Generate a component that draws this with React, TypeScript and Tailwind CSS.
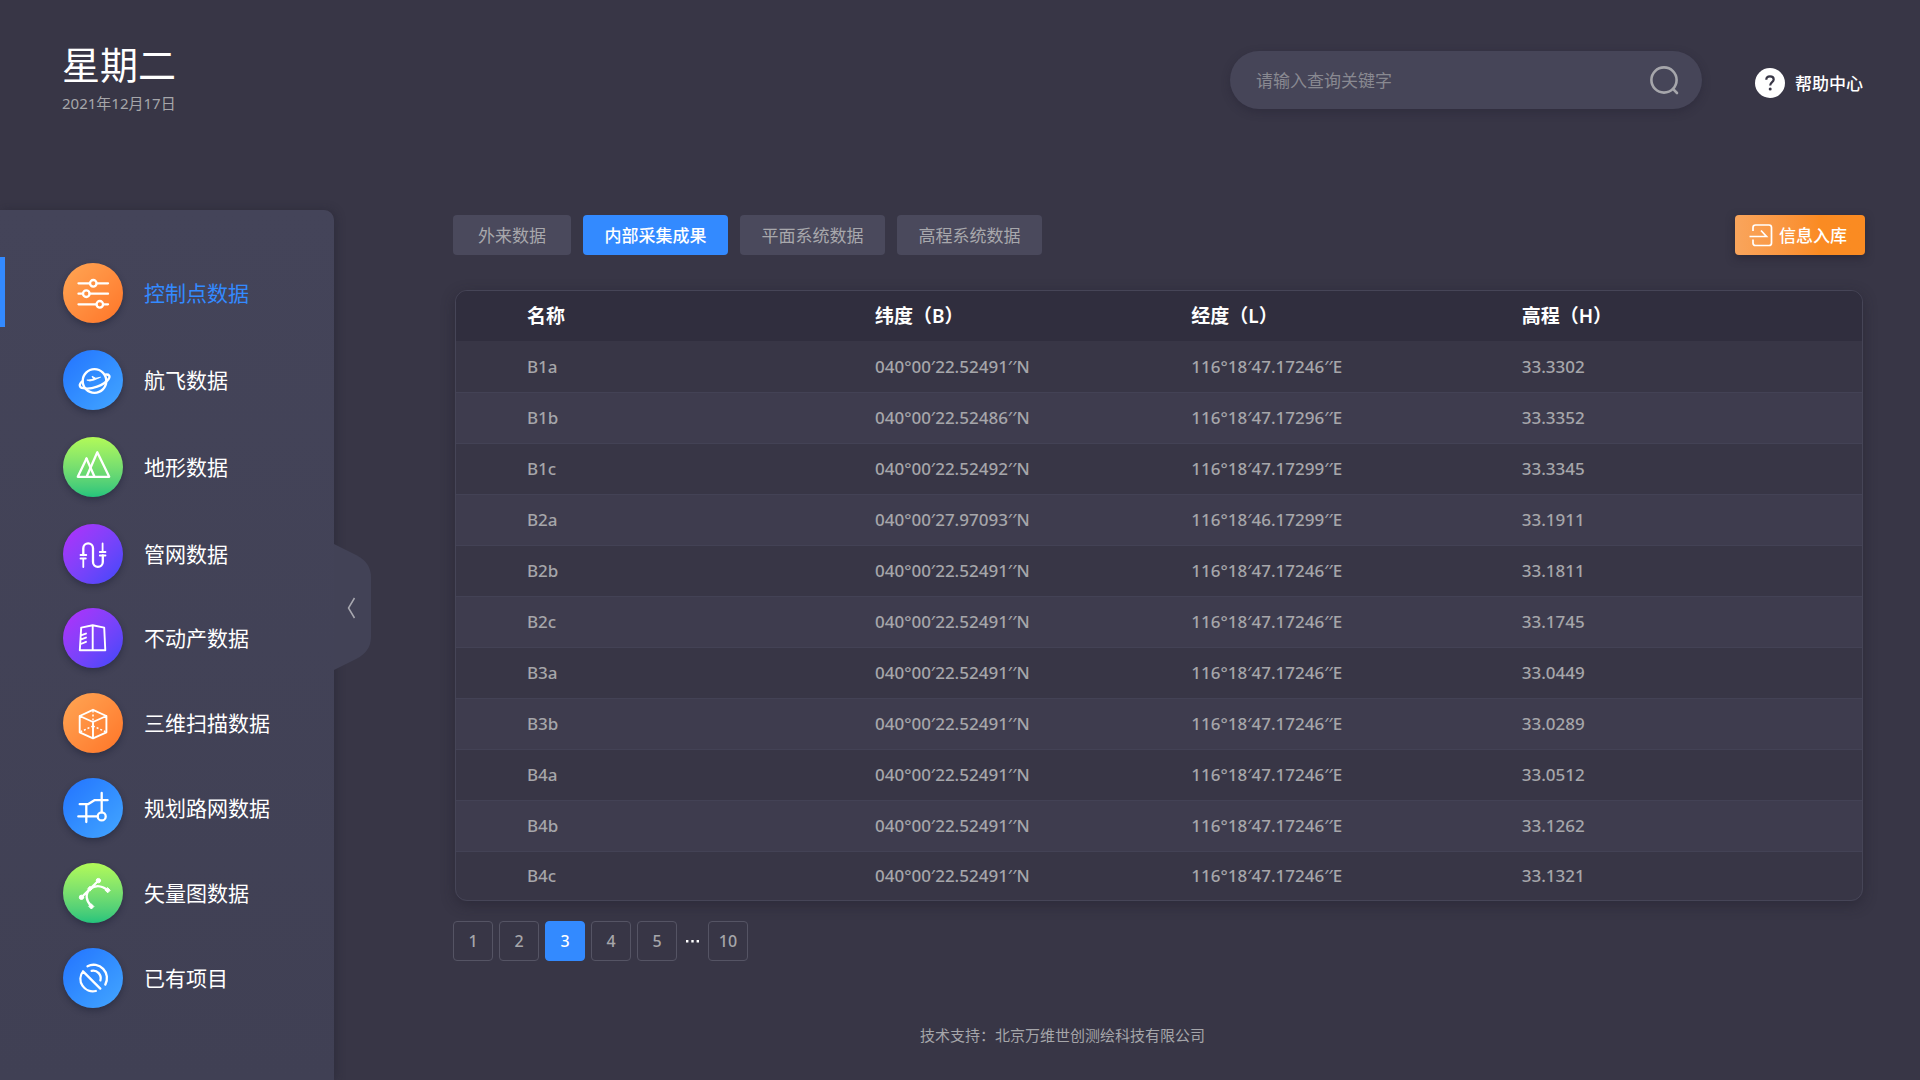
import type { ReactNode } from "react";

type MenuItem = {
    label: string;
    color: string;
    icon: ReactNode;
    active?: boolean;
};

const ORANGE = "bg-linear-to-br from-[#ffa654] to-[#ff7426]";
const BLUE = "bg-linear-to-br from-[#2472ff] to-[#44a6ff]";
const GREEN = "bg-linear-to-b from-[#b2fa57] to-[#22c47c]";
const PURPLE = "bg-linear-to-br from-[#b32cfa] to-[#3a47fa]";

const mainItems: MenuItem[] = [
    {
        label: "控制点数据",
        color: ORANGE,
        active: true,
        icon: (
            <>
                <path d="M15.5 20.3H27M33.6 20.3H45M15.5 30.7H20M26.6 30.7H45M15.5 41.3H33.4M40 41.3H45" />
                <circle cx="30.3" cy="20.3" r="3.3" />
                <circle cx="23.3" cy="30.7" r="3.3" />
                <circle cx="36.8" cy="41.3" r="3.3" />
            </>
        ),
    },
    {
        label: "航飞数据",
        color: BLUE,
        icon: (
            <>
                <circle cx="31.5" cy="31" r="11.8" />
                <path d="M42.3 24.6C46 24 47.6 26 45.6 29C41 35.6 28 39.8 20.4 38.2C15.8 37.4 15.6 34.2 19.6 31.2" />
                <path d="M24.2 30.2L26.8 31L31.2 30L37.6 27.2L32.8 28.2L29 26.2L30.4 29Z" fill="#fff" strokeWidth="0.8" />
            </>
        ),
    },
    {
        label: "地形数据",
        color: GREEN,
        icon: (
            <>
                <path d="M23.5 21.5L14.8 39.8H46.2L34.3 15.2L23.6 39.8" />
                <path d="M23.5 21.5L31.5 39.8" />
            </>
        ),
    },
    {
        label: "管网数据",
        color: PURPLE,
        icon: (
            <>
                <path d="M20.3 31V24.2A4.85 4.85 0 0 1 30 24.2V38A4.9 4.9 0 0 0 39.8 38V31.5" />
                <path d="M17.5 31H23.3M17.5 34.5H22.8M20.3 34.5V43M36.8 28H42.5M36.8 31.5H42.5M39.6 19.5V28" strokeWidth="1.8" />
            </>
        ),
    },
];

const projectItems: MenuItem[] = [
    {
        label: "不动产数据",
        color: PURPLE,
        icon: (
            <path
                d="M16.8 42.3L18.2 19.6L29.7 17.2L41.2 19.6L42.3 42.3ZM29.7 17.2V42.3M18.6 27.2L23 25.6M18.2 31.4L23 29.6M17.8 36L23 33.8"
                strokeWidth="1.9"
            />
        ),
    },
    {
        label: "三维扫描数据",
        color: ORANGE,
        icon: (
            <>
                <path d="M30 16.8L43.4 23V39.3L30 45.3L16.7 39.3V23ZM16.7 23L30 29L43.4 23M30 29V45.3" strokeWidth="1.9" />
                <path d="M30 17.5V29M30 33L17.5 38.8M30 33L42.6 38.8" strokeWidth="1.5" strokeDasharray="2 2" strokeLinecap="butt" />
            </>
        ),
    },
    {
        label: "规划路网数据",
        color: BLUE,
        icon: (
            <>
                <path d="M16.7 26.2H25L31.4 22.2H44.6M23.3 26.2V44M15.3 38.4H34.6M38.7 15V34.4" />
                <circle cx="38.7" cy="38.4" r="4" />
            </>
        ),
    },
    {
        label: "矢量图数据",
        color: GREEN,
        icon: (
            <>
                <path d="M18.5 34.3L35.3 17.7M28.3 43C22.8 37.6 22 31 27 25.8C32.6 21.8 39.4 22.6 44.6 27.3" />
                <circle cx="18.5" cy="34.3" r="2.2" fill="#fff" strokeWidth="1" />
                <circle cx="35.4" cy="17.6" r="2.2" fill="#fff" strokeWidth="1" />
                <path d="M24.8 25.5L27 23.3L29.4 25.6L27 28ZM44.7 24.8L47.2 27.3L44.7 29.8L42.2 27.3ZM28.4 41L30.9 43.5L28.4 46L25.9 43.5Z" fill="#fff" strokeWidth="1" />
            </>
        ),
    },
    {
        label: "已有项目",
        color: BLUE,
        icon: (
            <path d="M20 23.4L37.3 40.6M20 23.4A12.4 12.4 0 0 0 32.8 43M24.5 18.2A13.4 13.4 0 0 1 42.3 36.6M28.6 22.8A7.6 7.6 0 0 1 37.4 32.4" />
        ),
    },
];

const tabs = [
    { label: "外来数据", size: "w-[118px]" },
    { label: "内部采集成果", size: "w-[145px]", active: true },
    { label: "平面系统数据", size: "w-[145px]" },
    { label: "高程系统数据", size: "w-[145px]" },
];

const rows = [
    ["B1a", "040°00′22.52491′′N", "116°18′47.17246′′E", "33.3302"],
    ["B1b", "040°00′22.52486′′N", "116°18′47.17296′′E", "33.3352"],
    ["B1c", "040°00′22.52492′′N", "116°18′47.17299′′E", "33.3345"],
    ["B2a", "040°00′27.97093′′N", "116°18′46.17299′′E", "33.1911"],
    ["B2b", "040°00′22.52491′′N", "116°18′47.17246′′E", "33.1811"],
    ["B2c", "040°00′22.52491′′N", "116°18′47.17246′′E", "33.1745"],
    ["B3a", "040°00′22.52491′′N", "116°18′47.17246′′E", "33.0449"],
    ["B3b", "040°00′22.52491′′N", "116°18′47.17246′′E", "33.0289"],
    ["B4a", "040°00′22.52491′′N", "116°18′47.17246′′E", "33.0512"],
    ["B4b", "040°00′22.52491′′N", "116°18′47.17246′′E", "33.1262"],
    ["B4c", "040°00′22.52491′′N", "116°18′47.17246′′E", "33.1321"],
];

const pages = ["1", "2", "3", "4", "5", "…", "10"];

function MenuList({ items, gap }: { items: MenuItem[]; gap: string }) {
    return (
        <ul className={`flex flex-col ${gap}`}>
            {items.map((item) => (
                <li key={item.label} className="relative">
                    {item.active && <span className="absolute left-0 -top-[6px] w-[5px] h-[70px] bg-[#338aff]" />}
                    <a href="#" className={`flex items-center gap-[21px] pl-[63px] text-[21px] ${item.active ? "text-[#338aff]" : "text-white"}`}>
                        <span className={`w-[60px] h-[60px] shrink-0 rounded-full shadow-[0_3px_6px_rgba(20,25,45,0.4)] ${item.color}`}>
                            <svg viewBox="0 0 60 60" fill="none" stroke="#fff" strokeWidth="2.3" strokeLinecap="round" strokeLinejoin="round">
                                {item.icon}
                            </svg>
                        </span>
                        {item.label}
                    </a>
                </li>
            ))}
        </ul>
    );
}

function Sidebar() {
    return (
        <nav className="relative w-[334px] shrink-0 pt-[53px] rounded-tr-[10px] bg-linear-to-b from-[#444459] to-[#404054] shadow-[2px_0_10px_rgba(30,28,42,0.35)]">
            <div className="flex flex-col gap-6">
                <MenuList items={mainItems} gap="gap-[27px]" />
                <MenuList items={projectItems} gap="gap-[25px]" />
            </div>
            {/* 收起按钮 */}
            <button type="button" aria-label="收起" className="absolute left-full top-[334px] w-[37px] h-[126px]">
                <svg viewBox="0 0 37 126" fill="none">
                    <path d="M0 0L23 11.5Q37 19 37 33V93Q37 107 23 114.5L0 126Z" fill="#424256" />
                    <path d="M20.5 54L14.5 64L20.5 74" stroke="#a8a8b0" strokeWidth="1.5" />
                </svg>
            </button>
        </nav>
    );
}

function Header() {
    return (
        <header className="flex justify-between h-[210px] pl-[62px] pr-[57px]">
            <div className="pt-[41px]">
                <h1 className="text-[38px] leading-[44px] text-white">星期二</h1>
                <p className="mt-2 text-[15px] leading-5 text-[#a6a6aa] font-['Noto_Sans','Noto_Sans_CJK_SC',sans-serif]">2021年12月17日</p>
            </div>
            <div className="flex items-start">
                <form className="flex items-center w-[472px] h-[58px] mt-[51px] mr-[53px] pl-[26px] pr-[23px] rounded-full bg-[#464558] shadow-[0_3px_8px_rgba(35,33,50,0.4)]">
                    <input
                        type="search"
                        aria-label="查询关键字"
                        placeholder="请输入查询关键字"
                        className="flex-1 min-w-0 bg-transparent text-[17px] text-white placeholder:text-[#898991] outline-none"
                    />
                    <button type="submit" aria-label="搜索">
                        <svg width="30" height="30" viewBox="0 0 30 30" fill="none" stroke="#a6a6ab" strokeWidth="2.6" strokeLinecap="round">
                            <circle cx="15" cy="15" r="12.6" />
                            <path d="M24.2 24.2L28 28" />
                        </svg>
                    </button>
                </form>
                <a href="#" className="flex items-center gap-[10px] h-[30px] mt-[68px] text-[17px] font-medium text-white">
                    <svg width="30" height="30" viewBox="0 0 30 30" fill="none">
                        <circle cx="15" cy="15" r="15" fill="#fff" />
                        <path d="M11.3 11.8C11.3 9.5 12.9 8.4 15 8.4C17.2 8.4 18.7 9.6 18.7 11.5C18.7 14 15.2 14.3 15.2 17.4" stroke="#383646" strokeWidth="2.2" />
                        <circle cx="15.2" cy="21.1" r="1.5" fill="#383646" />
                    </svg>
                    帮助中心
                </a>
            </div>
        </header>
    );
}

function DataTable() {
    return (
        <div className="mx-[2px] mt-[35px] overflow-hidden rounded-[12px] border border-[#464557] shadow-[0_4px_14px_rgba(30,28,42,0.45)]">
            <table className="w-full table-fixed text-left font-['Noto_Sans','Noto_Sans_CJK_SC',sans-serif]">
                <colgroup>
                    <col className="w-[29.8%]" />
                    <col className="w-[22.5%]" />
                    <col className="w-[23.5%]" />
                    <col />
                </colgroup>
                <thead>
                    <tr className="h-[50px] bg-[#302e3e] text-[19px] text-white">
                        <th className="pl-[71px] font-semibold">名称</th>
                        <th className="font-semibold">纬度（B）</th>
                        <th className="font-semibold">经度（L）</th>
                        <th className="font-semibold">高程（H）</th>
                    </tr>
                </thead>
                <tbody className="text-[17px] font-medium text-[#a6a6aa]">
                    {rows.map((row) => (
                        <tr key={row[0]} className="h-[51px] last:h-[49px] border-b border-[#434255] last:border-b-0 even:bg-[#3e3c4e]">
                            <td className="pl-[71px]">{row[0]}</td>
                            <td>{row[1]}</td>
                            <td>{row[2]}</td>
                            <td>{row[3]}</td>
                        </tr>
                    ))}
                </tbody>
            </table>
        </div>
    );
}

function Pagination() {
    return (
        <div className="flex gap-[6px] mt-5 text-[16px] font-medium font-['Noto_Sans',sans-serif]">
            {pages.map((page) =>
                page === "…" ? (
                    <span key={page} className="flex items-center justify-center w-[19px]">
                        <svg width="15" height="4" viewBox="0 0 15 4" fill="#fff">
                            <path d="M1 1H3.4V3.4H1ZM6.3 1H8.7V3.4H6.3ZM11.6 1H14V3.4H11.6Z" />
                        </svg>
                    </span>
                ) : (
                    <button
                        key={page}
                        type="button"
                        className={`w-10 h-10 rounded-[4px] border ${page === "3" ? "border-[#338aff] bg-[#338aff] text-white" : "border-[#555464] text-[#a6a6aa]"}`}
                    >
                        {page}
                    </button>
                )
            )}
        </div>
    );
}

export default function App() {
    return (
        <div className="flex flex-col min-h-screen bg-[#383646] font-['Noto_Sans_CJK_SC',sans-serif]">
            <Header />
            <div className="flex flex-1">
                <Sidebar />
                <main className="flex-1 min-w-0 pl-[119px] pr-[55px] pt-[5px]">
                    <div className="flex items-center justify-between">
                        <div className="flex gap-3">
                            {tabs.map((tab) => (
                                <button
                                    key={tab.label}
                                    type="button"
                                    className={`h-10 rounded-[4px] text-[17px] ${tab.size} ${tab.active ? "bg-[#338aff] font-medium text-white" : "bg-[#4a495c] text-[#a8a8ac]"}`}
                                >
                                    {tab.label}
                                </button>
                            ))}
                        </div>
                        <button
                            type="button"
                            className="flex items-center gap-[6px] h-10 px-[14px] w-[130px] rounded-[4px] bg-linear-to-r from-[#f9a55c] to-[#fa8b22] to-65% text-[17px] font-medium whitespace-nowrap text-white shadow-[0_3px_8px_rgba(30,28,42,0.5)]"
                        >
                            <svg className="shrink-0" width="24" height="24" viewBox="0 0 24 24" fill="none" stroke="#fff" strokeWidth="1.7">
                                <path d="M4 8V4.5Q4 2 6.5 2H20Q22.5 2 22.5 4.5V20Q22.5 22.5 20 22.5H6.5Q4 22.5 4 20V16.5" />
                                <path d="M0.5 13.5H17.5L12 7.5" />
                            </svg>
                            信息入库
                        </button>
                    </div>
                    <DataTable />
                    <Pagination />
                    <footer className="pl-[467px] mt-[62px] text-[15px] leading-6 text-[#a6a6aa]">技术支持：北京万维世创测绘科技有限公司</footer>
                </main>
            </div>
        </div>
    );
}
